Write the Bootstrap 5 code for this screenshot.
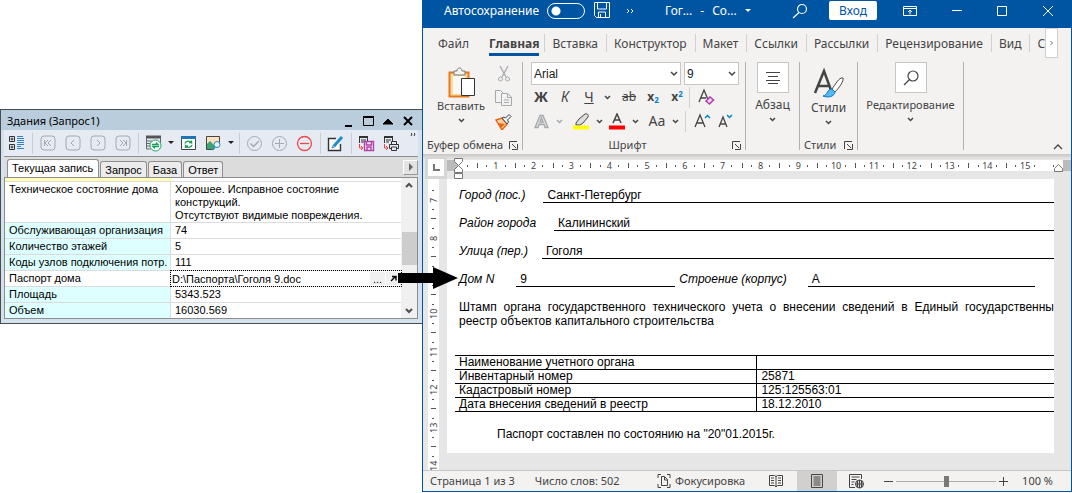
<!DOCTYPE html>
<html lang="ru">
<head>
<meta charset="utf-8">
<meta name="viewport" content="width=device-width, initial-scale=1">
<title>Здания — паспорт дома</title>
<link href="https://cdn.jsdelivr.net/npm/bootstrap@5.3.0/dist/css/bootstrap.min.css" rel="stylesheet">
<style>
:root{--word:#0055a2;--ink:#444;--rib:#f3f2f1}
body{background:#fff;min-height:100vh;font:12px/16px "Noto Sans","Open Sans",sans-serif;color:var(--ink)}
button{border:0;background:none;padding:0;color:inherit;font:inherit;line-height:inherit;display:inline-flex;align-items:center;justify-content:center}
svg{display:block;flex:none;fill:none;stroke:currentColor}
a{color:inherit;text-decoration:none}
.dim{color:#a5a9ae}
.warn{color:#f04848}
.cap-text{font-size:11px}

/* record window */
.rec-side{flex:0 0 422px;padding-top:109px}
.rec-win{border:1px solid #4a4d50;border-right:0;background:#d5e2ee;padding:0 4px 4px 3px;color:#000}
.rec-title{background:#b9cddd;margin:0 -4px 0 -3px;height:20px;padding:1px 4px 0 6px;font-size:11px}
.rec-title button{width:20px;height:18px}
.rec-bar{background:#e6ebf3;height:26px;color:#333}
.rec-bar button{width:25px;height:24px}
.rec-bar .drop-btn{width:10px}
.bar-sep{flex:0 0 6px;height:21px;background:linear-gradient(#c9ced6,#c9ced6) center/1px 100% no-repeat}
.rec-tabs{background:#dcdcdc;height:21px;border-top:1px solid #8d8d8d;padding-left:3px;font:11px/16px "Liberation Sans",sans-serif}
.rec-tabs a{border:1px solid #8f8f8f;border-bottom:0;border-radius:3px 3px 0 0;height:16px;line-height:16px;padding:0 4px;background:#ececec;margin-right:1px;white-space:nowrap}
.rec-tabs a.on{background:#fff;height:18px;line-height:17px;padding:0 5px 0 4px}
.rec-tabs button{width:15px;height:15px;background:#e3e3e3;border:1px solid;border-color:#fff #999 #999 #fff;align-self:center}
.rec-body{background:#fff;border:1px solid #8d8d8d}
.strip{height:3px;background:linear-gradient(90deg,#ffffb8 167px,#fff 167px)}
.rec-grid{width:100%;table-layout:fixed;border-collapse:separate;border-spacing:0;font:11px/13px "Liberation Sans",sans-serif}
.rec-grid th{width:166px;font-weight:400;background:#dff;padding:1px 0 1px 4px;vertical-align:top;border:solid #dcdcdc;border-width:1px 1px 0 0;white-space:nowrap}
.rec-grid td{padding:1px 0 1px 4px;vertical-align:top;border-top:1px solid #dcdcdc}
.rec-grid tr:first-child td{padding-bottom:0}
.rec-grid .plain th{background:#fff}
.path-cell{height:15px;outline:1px dotted #000;margin:-1px 0 -1px -4px;line-height:14px}
.path-cell button{width:16px;height:13px;background:#f0f0f0;border-left:1px solid #fff;line-height:10px;margin-top:1px}
.path-cell input{border:0;padding:0 0 0 1px;background:none;font:inherit;min-width:0;outline:0}
.vbar{flex:0 0 16px;background:#f0f0f0;color:#505050}
.vbar i{display:block;width:15px;height:33px;background:#cdcdcd}
.arrow{position:absolute;left:calc(100% - 3px);top:-4px;z-index:9;fill:#000;stroke:none}

/* word window */
.word{border:1px solid var(--word);border-top:0;background:#e6e6e6;min-width:0;height:calc(100vh - 1px);min-height:480px}
.word-title{background:var(--word);color:#fff;height:28px;padding:0 17px 7px 21px;flex:none}
.switch{appearance:none;width:38px;height:16px;border:1px solid #fff;border-radius:8px;margin:0 0 0 8px;background:radial-gradient(circle at 8px 7px,#fff 4px,transparent 5px)}
.enter{background:#fff;color:var(--word);width:48px;height:19px;border-radius:2px;margin:0 26px 0 21px}
.caps{width:151px}
.word-tabs{background:var(--rib);height:32px;font-size:12px;padding-left:7px;overflow:hidden;flex:none}
.word-tabs a{line-height:16px;height:28px;padding:8px 8px 0;margin:0;white-space:nowrap;flex:none}
.word-tabs a.sp{background:linear-gradient(#d2d0ce,#d2d0ce) 0 6px/1px 18px no-repeat}
.word-tabs a.on{font-weight:700;padding:8px 0 0;margin:0 5px 0 12px;border-bottom:3px solid var(--word)}
.more{width:13px;height:30px;background:#fff;border:1px solid #d2d0ce;color:#777}
.ribbon{background:var(--rib);height:94px;padding-top:2px;flex:none}
.grp{height:88px;border-right:1px solid #b3b0ad;flex:none}
.grp-foot{height:10px;line-height:10px;font-size:11px;white-space:nowrap;flex:none}
.big{flex-direction:column;justify-content:flex-start;line-height:16px}
.icon-box{width:32px;height:31px;background:#fff;border:1px solid #c8c6c4;display:flex;align-items:center;justify-content:center}
.combo{appearance:none;height:23px;border:1px solid #c8c6c4;border-radius:0;background:#fff url("data:image/svg+xml,%3Csvg xmlns='http://www.w3.org/2000/svg' width='8' height='6'%3E%3Cpath d='M1 1l3 3 3-3' fill='none' stroke='%23444' stroke-width='1.5'/%3E%3C/svg%3E") right 2px center no-repeat;padding:0 2px;font:12px/20px "Liberation Sans",sans-serif;color:#222}
.tool-row{height:24px;padding-left:6px}
.tool-row button{width:24px;height:22px;flex:none;font-size:14px}
.tool-row .dn{width:12px}
.tool-row .sm{font-size:12px}
.sm sub,.sm sup{font-size:8px;color:#0088cc}
.v-line{width:1px;height:21px;background:#d2d0ce;flex:none}
.shade{height:5px;background:linear-gradient(#c8c6c4,#e6e6e6);flex:none}
.rule-row{height:20px;color:#444;flex:none}
.tab-corner{width:16px;height:17px;background:#fdfdfd;outline:3px solid #d6d6d6;margin:0 3px 0 5px;color:#777}
.rule-edge{width:11px;height:11px;margin-top:1px;background:#bbb;flex:none}
.rule-edge.end-edge{width:8px}
.h-rule{height:11px;background:#fff;position:relative;font-size:9px;line-height:11px;margin-top:1px}
.h-rule span{flex:1 1 0;text-align:center;background:linear-gradient(#555,#555) 0 50%/1px 5px no-repeat,linear-gradient(#555,#555) 25% 50%/1px 2px no-repeat,linear-gradient(#555,#555) 75% 50%/1px 2px no-repeat}
.h-rule span.half{flex-grow:.5;background:linear-gradient(#555,#555) 50% 50%/1px 2px no-repeat}
.mark-l,.mark-r{position:absolute;top:-2px;left:-4px;stroke:#777;fill:#fff}
.mark-r{left:auto;right:-1px}
.work{flex:1 1 0;min-height:0;overflow:hidden}
.v-rule{width:11px;margin:0 8px 0 5px;background:#fff;font-size:9px;line-height:11px;overflow:hidden;padding-top:2px;flex:none}
.v-rule span{display:flex;height:38px;writing-mode:vertical-rl;transform:rotate(180deg);justify-content:center;text-align:center;background:linear-gradient(#555,#555) 50% 0/5px 1px no-repeat,linear-gradient(#555,#555) 50% 25%/2px 1px no-repeat,linear-gradient(#555,#555) 50% 75%/2px 1px no-repeat}
.sheet{background:#fff;color:#000;margin:0 17px 17px 0;padding:9px 0 12px 8px;font:12px/14px "Liberation Sans",Arial,sans-serif;min-width:0}
.field{height:15px;margin-bottom:13px;white-space:nowrap}
.field u{text-decoration:none;border-bottom:1px solid #000;padding-left:4px;height:15px}
.stamp{padding-left:4px}
.stamp div:first-child{text-align-last:justify}
.doc-table{width:100%;margin:27px 0 15px;border-collapse:collapse}
.doc-table th,.doc-table td{font-weight:400;border:solid #000;border-width:1px 0;padding:0 4px;height:14px;line-height:13px}
.doc-table td{border-left-width:1px}
.status{background:var(--rib);border-top:1px solid #c8c6c4;height:21px;font-size:11px;line-height:20px;white-space:nowrap;flex:none}
.zoomer{appearance:none;width:100px;height:11px;margin:0 3px;background:linear-gradient(#b0aeac,#b0aeac) 0 50%/100% 1px no-repeat}
.zoomer::-webkit-slider-thumb{appearance:none;width:5px;height:11px;background:#777}
</style>
</head>
<body class="d-flex align-items-start">

<aside class="rec-side">
 <section class="rec-win">
  <header class="rec-title d-flex align-items-center">
   <span class="me-auto">Здания (Запрос1)</span>
   <button aria-label="Свернуть"><svg width="12" height="12" stroke-width="2"><path d="M3 11h7"/></svg></button>
   <button aria-label="Развернуть"><svg width="12" height="12"><path d="M1.500 2.500h10v8h-10zM1 1.500h11"/></svg></button>
   <button aria-label="Скрыть"><svg width="12" height="12"><path d="M1 9l5-5 5 5z" fill="#000"/></svg></button>
   <button aria-label="Закрыть"><svg width="12" height="12" stroke-width="2"><path d="M2 2l8 8M10 2l-8 8"/></svg></button>
  </header>
  <div class="rec-bar d-flex align-items-center">
   <button aria-label="Дерево"><svg width="17" height="16"><path d="M1.500 1.500h5v5h-5zM1.500 9.500h5v5h-5zM2.500 4h3M4 2.500v3M2.500 12h3M4 10.500v3"/><path d="M9 1.500h6M9 3.500h7M9 5.500h7M9 7.500h7M9 9.500h7M9 11.500h4M9 13.500h7" stroke="#2b83c6"/></svg></button>
   <span class="bar-sep"></span>
   <button class="dim" aria-label="Первая"><svg width="16" height="16"><rect x="1" y="1" width="14" height="14" rx="3"/><path d="M8 5L5 8l3 3M11 5L8 8l3 3M4.500 5v6"/></svg></button>
   <button class="dim" aria-label="Назад"><svg width="16" height="16"><rect x="1" y="1" width="14" height="14" rx="3"/><path d="M9 5L6 8l3 3"/></svg></button>
   <button class="dim" aria-label="Вперёд"><svg width="16" height="16"><rect x="1" y="1" width="14" height="14" rx="3"/><path d="M7 5l3 3-3 3"/></svg></button>
   <button class="dim" aria-label="Последняя"><svg width="16" height="16"><rect x="1" y="1" width="14" height="14" rx="3"/><path d="M8 5l3 3-3 3M5 5l3 3-3 3M11.500 5v6"/></svg></button>
   <span class="bar-sep"></span>
   <button aria-label="Обновить таблицу"><svg width="17" height="17"><path d="M1 2h15" stroke-width="3" stroke="#555"/><path d="M1.500 3v11h4M15.500 3v5M2 6h5M2 8.500h3M2 11h3" stroke="#666"/><g stroke="#19a05a"><circle cx="10.500" cy="10.500" r="5.500" fill="#fff"/><path d="M7 9.500h6l-2-2M14 11.500H8l2 2" stroke-width="1.400"/></g></svg></button>
   <button class="drop-btn" aria-label="Меню"><svg width="6" height="4"><path d="M0 0h6L3 3z" fill="#222" stroke="none"/></svg></button>
   <button aria-label="Обновить окно"><svg width="17" height="16"><path d="M1.500 2v12.500h14V2" stroke="#444" fill="#fff"/><path d="M1 2.500h15" stroke="#1f73b7" stroke-width="3"/><path d="M5 8.500c1-3 5-3 6.500-1V5.500M12 10c-1 3-5 3-6.500 1V13M11.500 7.500H9M5.500 11H8" stroke="#19a05a" stroke-width="1.400"/></svg></button>
   <button aria-label="Карта"><svg width="17" height="16"><path d="M1.500 1.500h13v13h-13z" fill="#ffe0c0" stroke="#444"/><path d="M2 14V9l3-3 5 5v3z" fill="#3fa56c" stroke="none"/><path d="M8 15l8-6v6z" fill="#e6ebf3" stroke="none"/><circle cx="12" cy="9.500" r="3" fill="#e7f4fb" stroke="#2487c7"/><path d="M10 12l-3 3" stroke="#2487c7" stroke-width="1.500"/></svg></button>
   <button class="drop-btn" aria-label="Меню"><svg width="6" height="4"><path d="M0 0h6L3 3z" fill="#222" stroke="none"/></svg></button>
   <span class="bar-sep"></span>
   <button class="dim" aria-label="Применить"><svg width="17" height="17"><circle cx="8.500" cy="8.500" r="7"/><path d="M4.500 8.500l3 3L13 6" stroke-width="1.500"/></svg></button>
   <button class="dim" aria-label="Добавить"><svg width="17" height="17"><circle cx="8.500" cy="8.500" r="7"/><path d="M4 8.500h9M8.500 4v9"/></svg></button>
   <button class="warn" aria-label="Удалить"><svg width="17" height="17" stroke-width="1.300"><circle cx="8.500" cy="8.500" r="7"/><path d="M4 8.500h9"/></svg></button>
   <span class="bar-sep"></span>
   <button aria-label="Правка"><svg width="18" height="17"><path d="M9 3.500H1.500v12h12V9" stroke-width="1.400" fill="#fff"/><path d="M7 11l8-9" stroke="#1f8ecb" stroke-width="3"/><path d="M5 13l1.500-3 1.500 1.500z" stroke="#1f8ecb"/></svg></button>
   <span class="bar-sep"></span>
   <button aria-label="Сохранить отчёт"><svg width="17" height="17"><path d="M1 2h9" stroke-width="2"/><path d="M1.500 3v5M9.500 3v3M3 5h5M3 7h3"/><path d="M1.500 9v4h3M3 11l2 2-2 2" stroke="#ee4444"/><path d="M6.500 6.500h9v9h-9zM8.500 7v3h5V7M9 15v-3h4v3" stroke="#b044a8" stroke-width="1.400" fill="#f8e5f5"/></svg></button>
   <button aria-label="Печать отчёта"><svg width="17" height="17"><path d="M1 2h9" stroke-width="2"/><path d="M1.500 3v5M9.500 3v3M3 5h5M3 7h3"/><path d="M1.500 9v4h3M3 11l2 2-2 2" stroke="#ee4444"/><path d="M8.500 9V6.500h5V9M8 13.500H6.500v-4h9v4H14M8.500 12h5v3.500h-5z"/></svg></button>
   <button class="drop-btn align-self-start ms-auto" style="height:9px" aria-label="Ещё"><svg width="8" height="5"><path d="M2 1l1 1-1 2M5 1l1 1-1 2"/></svg></button>
  </div>
  <nav class="rec-tabs d-flex align-items-end">
   <a href="#" class="on">Текущая запись</a><a href="#">Запрос</a><a href="#">База</a><a href="#">Ответ</a>
   <button class="ms-auto" aria-label="Дальше"><svg width="6" height="8"><path d="M1 0l4 4-4 4z" fill="#666" stroke="none"/></svg></button>
  </nav>
  <div class="rec-body d-flex">
   <div class="flex-grow-1">
    <div class="strip"></div>
    <table class="rec-grid">
     <tr class="plain"><th scope="row">Техническое состояние дома</th><td>Хорошее. Исправное состояние<br>конструкций.<br>Отсутствуют видимые повреждения.</td></tr>
     <tr><th scope="row">Обслуживающая организация</th><td>74</td></tr>
     <tr><th scope="row">Количество этажей</th><td>5</td></tr>
     <tr><th scope="row">Коды узлов подключения потр.</th><td>111</td></tr>
     <tr class="plain"><th scope="row"><label for="pass">Паспорт дома</label></th><td><div class="path-cell d-flex position-relative"><input id="pass" class="flex-grow-1" value="D:\Паспорта\Гоголя 9.doc"><button aria-label="Выбрать файл">...</button><button aria-label="Открыть"><svg width="7" height="7" stroke-width="1.400"><path d="M1 6l4-4M2 1.500h4V5.500"/></svg></button>
      <svg class="arrow" width="60" height="22"><path d="M0 6h35V0l25 11-25 11v-6H0z"/></svg></div></td></tr>
     <tr><th scope="row">Площадь</th><td>5343.523</td></tr>
     <tr><th scope="row">Объем</th><td>16030.569</td></tr>
    </table>
   </div>
   <div class="vbar d-flex flex-column align-items-center justify-content-between py-1">
    <svg width="8" height="6" stroke-width="2"><path d="M1 5l3-3 3 3"/></svg>
    <i></i>
    <svg width="8" height="6" stroke-width="2"><path d="M1 1l3 3 3-3"/></svg>
   </div>
  </div>
 </section>
</aside>

<main class="word flex-grow-1 d-flex flex-column">
 <header class="word-title d-flex align-items-center">
  <label for="auto">Автосохранение</label><input type="checkbox" id="auto" class="switch">
  <button style="margin-left:9px" aria-label="Сохранить"><svg width="16" height="17"><path d="M.5.5h15v15H2.500l-2-2zM3.500 1v6h9V1M4.500 15v-5h7v5M6.500 15v-3"/></svg></button>
  <button class="ms-3" aria-label="Ещё"><svg width="9" height="8"><path d="M1 2l2 2-2 2M5 2l2 2-2 2"/></svg></button>
  <button class="gap-2" style="margin-left:30px"><span>Гог...</span><span>-</span><span>Со...</span><svg width="6" height="4"><path d="M0 0h6L3 3z" fill="#fff" stroke="none"/></svg></button>
  <button aria-label="Поиск" class="ms-auto"><svg width="16" height="16" stroke-width="1.200"><circle cx="10" cy="6" r="4.500"/><path d="M7 9.500L1 15"/></svg></button>
  <button class="enter">Вход</button>
  <div class="d-flex justify-content-between align-items-center caps">
   <button aria-label="Лента"><svg width="14" height="12"><path d="M.5 1.500h13v9H.5zM.5 3.500h13M7 9.500V5M5 7l2-2 2 2"/></svg></button>
   <button aria-label="Свернуть"><svg width="12" height="12"><path d="M1 5.500h10"/></svg></button>
   <button aria-label="Развернуть"><svg width="12" height="12"><path d="M1.500 1.500h9v9h-9z"/></svg></button>
   <button aria-label="Закрыть"><svg width="12" height="12"><path d="M1 1l10 10M11 1L1 11"/></svg></button>
  </div>
 </header>
 <nav class="word-tabs d-flex">
  <a href="#">Файл</a><a href="#" class="on">Главная</a><a href="#" class="sp">Вставка</a><a href="#" class="sp">Конструктор</a><a href="#" class="sp">Макет</a><a href="#" class="sp">Ссылки</a><a href="#" class="sp">Рассылки</a><a href="#" class="sp">Рецензирование</a><a href="#" class="sp">Вид</a><a href="#" class="sp pe-0">С</a>
  <button class="more" aria-label="Дальше"><svg width="4" height="6"><path d="M.5 1l2 2-2 2"/></svg></button>
 </nav>
 <div class="ribbon d-flex">
  <div class="grp d-flex flex-column" style="width:100px">
   <div class="d-flex flex-grow-1">
    <button class="big ms-2 pt-1 cap-text" style="width:60px"><svg width="30" height="32"><path d="M3.500 6.500h19v24h-19z" fill="#fbdc95" stroke="#e87722" stroke-width="2"/><path d="M7 10h12v18H7z" fill="#f8f8f8" stroke="none"/><path d="M8 9V5h3c0-4 5-4 5 0h3v4z" fill="#f3f2f1" stroke="#777"/><path d="M15.500 12.500h13v17h-13z" fill="#fff" stroke="#333"/></svg><span>Вставить</span><svg class="mt-1" width="7" height="5" stroke-width="1.500"><path d="M1 1l2.500 2.500L6 1"/></svg></button>
    <div class="d-flex flex-column gap-2 pt-1 ms-1">
     <button class="dim" aria-label="Вырезать"><svg width="16" height="16"><path d="M4 0l6 11M12 0L6 11" stroke-width="1.300"/><circle cx="4.500" cy="13" r="2"/><circle cx="11.500" cy="13" r="2"/></svg></button>
     <button class="dim" aria-label="Копировать"><svg width="17" height="16"><path d="M6 12.500H.5V.5h5l2 2V4M6.500 3.500h6l4 3.500v8.500h-10zM12.500 4v3.500h4M9 10h5M9 12.500h5"/></svg></button>
     <button aria-label="Формат по образцу"><svg width="17" height="16"><path d="M1 6l6-2 5 6-5 6z" fill="#fbd0a0" stroke="#e8640c" stroke-width="1.400"/><path d="M3 9l3 5 4-4z" fill="#e8640c" stroke="none"/><path d="M7 4l2-1 1.500 1L14 .5 16 2.500 12.500 6l1 2L12 10z" fill="#f3f2f1"/></svg></button>
    </div>
   </div>
   <div class="grp-foot d-flex align-items-center ps-1"><span>Буфер обмена</span><button class="ms-auto me-1" aria-label="Параметры буфера"><svg width="9" height="9"><path d="M.5 8V.5H8M3 3l4 4M8.500 3v5.500H3"/></svg></button></div>
  </div>
  <div class="grp d-flex flex-column" style="width:223px">
   <div class="d-flex ps-2" style="gap:3px"><select class="combo" style="width:150px" aria-label="Шрифт"><option>Arial</option></select><select class="combo" style="width:55px" aria-label="Размер"><option>9</option></select></div>
   <div class="tool-row d-flex align-items-center">
    <button><b>Ж</b></button><button><i>К</i></button><button><u>Ч</u></button><button class="dn" aria-label="Меню"><svg width="7" height="5" stroke-width="1.500"><path d="M1 1l2.500 2.500L6 1"/></svg></button><button class="ms-1 sm"><s>ab</s></button><button class="sm"><b>x<sub>2</sub></b></button><button class="sm"><b>x<sup>2</sup></b></button><span class="v-line"></span>
    <button class="ms-1" aria-label="Очистить формат"><svg width="17" height="17"><path d="M1 13L6 1l5 12M3 9h5" stroke-width="1.300"/><path d="M8 12l4-4 3.500 3-4 4z" fill="#f3d7f0" stroke="#b23cae" stroke-width="1.500"/></svg></button>
   </div>
   <div class="tool-row d-flex align-items-center">
    <button class="dim" aria-label="Эффекты"><svg width="15" height="15"><path d="M1 13.500L6 1.500h3l5 12h-3l-1-3H5l-1 3zM6 8h3L7.500 4z" fill="#ddd" stroke-width="1.300"/></svg></button><button class="dn dim" aria-label="Меню"><svg width="7" height="5" stroke-width="1.500"><path d="M1 1l2.500 2.500L6 1"/></svg></button>
    <button aria-label="Выделение" class="ms-1"><svg width="17" height="17"><path d="M3 10l3-4 6-5c2-1 4 1 3 3l-5 6-3 2H3z" fill="#ddd"/><path d="M0 14.500h16" stroke="#ff0" stroke-width="4"/></svg></button><button class="dn" aria-label="Меню"><svg width="7" height="5" stroke-width="1.500"><path d="M1 1l2.500 2.500L6 1"/></svg></button>
    <button aria-label="Цвет текста"><svg width="17" height="17"><path d="M4 10L8 1l4 9M5.500 7h5" stroke-width="1.500"/><path d="M0 14.500h16" stroke="red" stroke-width="4"/></svg></button><button class="dn" aria-label="Меню"><svg width="7" height="5" stroke-width="1.500"><path d="M1 1l2.500 2.500L6 1"/></svg></button>
    <button class="ms-1">Aa</button><button class="dn" aria-label="Меню"><svg width="7" height="5" stroke-width="1.500"><path d="M1 1l2.500 2.500L6 1"/></svg></button><span class="v-line ms-1"></span>
    <button class="ms-1" aria-label="Крупнее"><svg width="17" height="16"><path d="M1 14L6 2l5 12M3 10h6" stroke-width="1.300"/><path d="M11 5l2.500-2.500L16 5" stroke="#0088cc" stroke-width="1.500"/></svg></button><button aria-label="Мельче"><svg width="16" height="16"><path d="M1 14l4-10 4 10M2.500 11h5" stroke-width="1.300"/><path d="M9 2l2.500 2.500L14 2" stroke="#0088cc" stroke-width="1.500"/></svg></button>
   </div>
   <div class="grp-foot d-flex align-items-center mt-auto"><span class="flex-grow-1 text-center">Шрифт</span><button class="me-1" aria-label="Параметры шрифта"><svg width="9" height="9"><path d="M.5 8V.5H8M3 3l4 4M8.500 3v5.500H3"/></svg></button></div>
  </div>
  <div class="grp" style="width:54px">
   <button class="big w-100"><span class="icon-box"><svg width="16" height="14"><path d="M1 1.500h14M3 5.500h10M1 9.500h14M3 12.500h10"/></svg></span><span class="mt-1">Абзац</span><svg class="mt-1" width="7" height="5" stroke-width="1.500"><path d="M1 1l2.500 2.500L6 1"/></svg></button>
  </div>
  <div class="grp d-flex flex-column" style="width:58px">
   <button class="big pt-1 w-100"><svg width="31" height="34"><path d="M2 27L11 5l8 22M5 20h11" stroke-width="2.500"/><path d="M30 12c-4-1-8 7-11 11l3 3c4-4 9-11 8-14z" fill="#fff"/><path d="M19 23c-5 0-4 6-9 7 5 2 11 1 12-4z" fill="#55b8ee" stroke="#0078c4"/></svg><span>Стили</span><svg class="mt-1" width="7" height="5" stroke-width="1.500"><path d="M1 1l2.500 2.500L6 1"/></svg></button>
   <div class="grp-foot d-flex align-items-center mt-auto ps-1"><span>Стили</span><button class="ms-auto me-1" aria-label="Параметры стилей"><svg width="9" height="9"><path d="M.5 8V.5H8M3 3l4 4M8.500 3v5.500H3"/></svg></button></div>
  </div>
  <div class="grp" style="width:106px">
   <button class="big w-100 cap-text"><span class="icon-box"><svg width="16" height="16" stroke-width="1.200"><circle cx="10" cy="6" r="5"/><path d="M6.500 9.500L1 15"/></svg></span><span class="mt-1">Редактирование</span><svg class="mt-1" width="7" height="5" stroke-width="1.500"><path d="M1 1l2.500 2.500L6 1"/></svg></button>
  </div>
  <button class="ms-auto align-self-end mb-1 me-2" aria-label="Свернуть ленту"><svg width="10" height="7" stroke-width="1.300"><path d="M1 6l4-4 4 4"/></svg></button>
 </div>
 <div class="shade"></div>
 <div class="rule-row d-flex align-items-start">
  <button class="tab-corner" aria-label="Табуляция"><svg width="7" height="7" stroke-width="2"><path d="M1 0v6h6"/></svg></button>
  <div class="rule-edge"></div>
  <div class="h-rule d-flex flex-grow-1">
   <span class="half"></span><span>1</span><span>2</span><span>3</span><span>4</span><span>5</span><span>6</span><span>7</span><span>8</span><span>9</span><span>10</span><span>11</span><span>12</span><span>13</span><span>14</span><span>15</span><span class="half"></span>
   <svg class="mark-l" width="10" height="22"><path d="M.5.5h8v3l-4 4-4-4zM.5 14.500v-3l4-4 4 4v3zM.5 15.500h8v5h-8z"/></svg>
   <svg class="mark-r" width="10" height="16"><path d="M.5 13.500v-3l4-4 4 4v3z"/></svg>
  </div>
  <div class="rule-edge end-edge"></div>
 </div>
 <div class="work d-flex">
  <div class="v-rule"><span>7</span><span>8</span><span>9</span><span>10</span><span>11</span><span>12</span><span>13</span><span>14</span></div>
  <article class="sheet flex-grow-1">
   <div class="field d-flex ps-1"><i>Город (пос.)</i><u class="flex-grow-1" style="margin-left:18px">Санкт-Петербург</u></div>
   <div class="field d-flex ps-1"><i>Район города</i><u class="flex-grow-1" style="margin-left:18px">Калининский</u></div>
   <div class="field d-flex ps-1"><i>Улица (пер.)</i><u class="flex-grow-1" style="margin-left:14px">Гоголя</u></div>
   <div class="field d-flex ps-1"><i>Дом N</i><u style="margin-left:22px;width:159px">9</u><i class="ms-1">Строение (корпус)</i><u class="flex-grow-1" style="margin:0 19px 0 21px">А</u></div>
   <div class="stamp"><div>Штамп органа государственного технического учета о внесении сведений в Единый государственны</div><div>реестр объектов капитального строительства</div></div>
   <table class="doc-table">
    <tr><th scope="row" style="width:50.4%">Наименование учетного органа</th><td></td></tr>
    <tr><th scope="row">Инвентарный номер</th><td>25871</td></tr>
    <tr><th scope="row">Кадастровый номер</th><td>125:125563:01</td></tr>
    <tr><th scope="row">Дата внесения сведений в реестр</th><td>18.12.2010</td></tr>
   </table>
   <div style="padding-left:42px">Паспорт составлен по состоянию на "20"01.2015г.</div>
  </article>
 </div>
 <footer class="status d-flex align-items-center">
  <span style="margin-left:7px">Страница 1 из 3</span><span style="margin-left:20px">Число слов: 502</span>
  <button class="ms-auto"><svg class="me-1" width="14" height="14"><path d="M1 4V.5h3M10 .5h3V4M13 10v3.500h-3M4 13.500H1V10M4.500 2.500h3l3 3v6h-6zM7.500 3v3h3"/></svg>Фокусировка</button>
  <button class="ms-4" aria-label="Чтение"><svg width="14" height="14"><path d="M7 2v11M.5 1.500h5L7 2.500l1.500-1h5v10H8.500L7 13l-1.500-1.500h-5zM2 4h3M2 6.500h3M2 9h3M9 4h3M9 6.500h3M9 9h3"/></svg></button>
  <button style="width:40px;height:20px;background:#d2d0ce;margin-left:14px" aria-label="Разметка страницы"><svg width="12" height="14"><path d="M.5.500h11v13H.5zM2.500 3h7M2.500 5h7M2.500 7h7M2.500 9h7M2.500 11h7"/></svg></button>
  <button style="margin:0 19px 0 8px" aria-label="Веб-документ"><svg class="ms-1" width="16" height="15"><path d="M6 13.500H.5V.500h12V5M2.500 3h8M2.500 5.500h5M2.500 8h3M2.500 10.500h2"/><circle cx="10.500" cy="10" r="4" fill="#ddd"/><path d="M6.500 10h8M10.500 6v8M8.500 7v6M12.500 7v6"/></svg></button>
  <button aria-label="Мельче"><svg width="9" height="9"><path d="M0 4.500h9"/></svg></button>
  <input type="range" class="zoomer" min="0" max="200" value="100" aria-label="Масштаб">
  <button aria-label="Крупнее"><svg width="9" height="9"><path d="M0 4.500h9M4.500 0v9"/></svg></button>
  <span style="margin:0 18px 0 14px">100 %</span>
 </footer>
</main>
<script src="https://cdn.jsdelivr.net/npm/bootstrap@5.3.0/dist/js/bootstrap.bundle.min.js"></script>
</body>
</html>
